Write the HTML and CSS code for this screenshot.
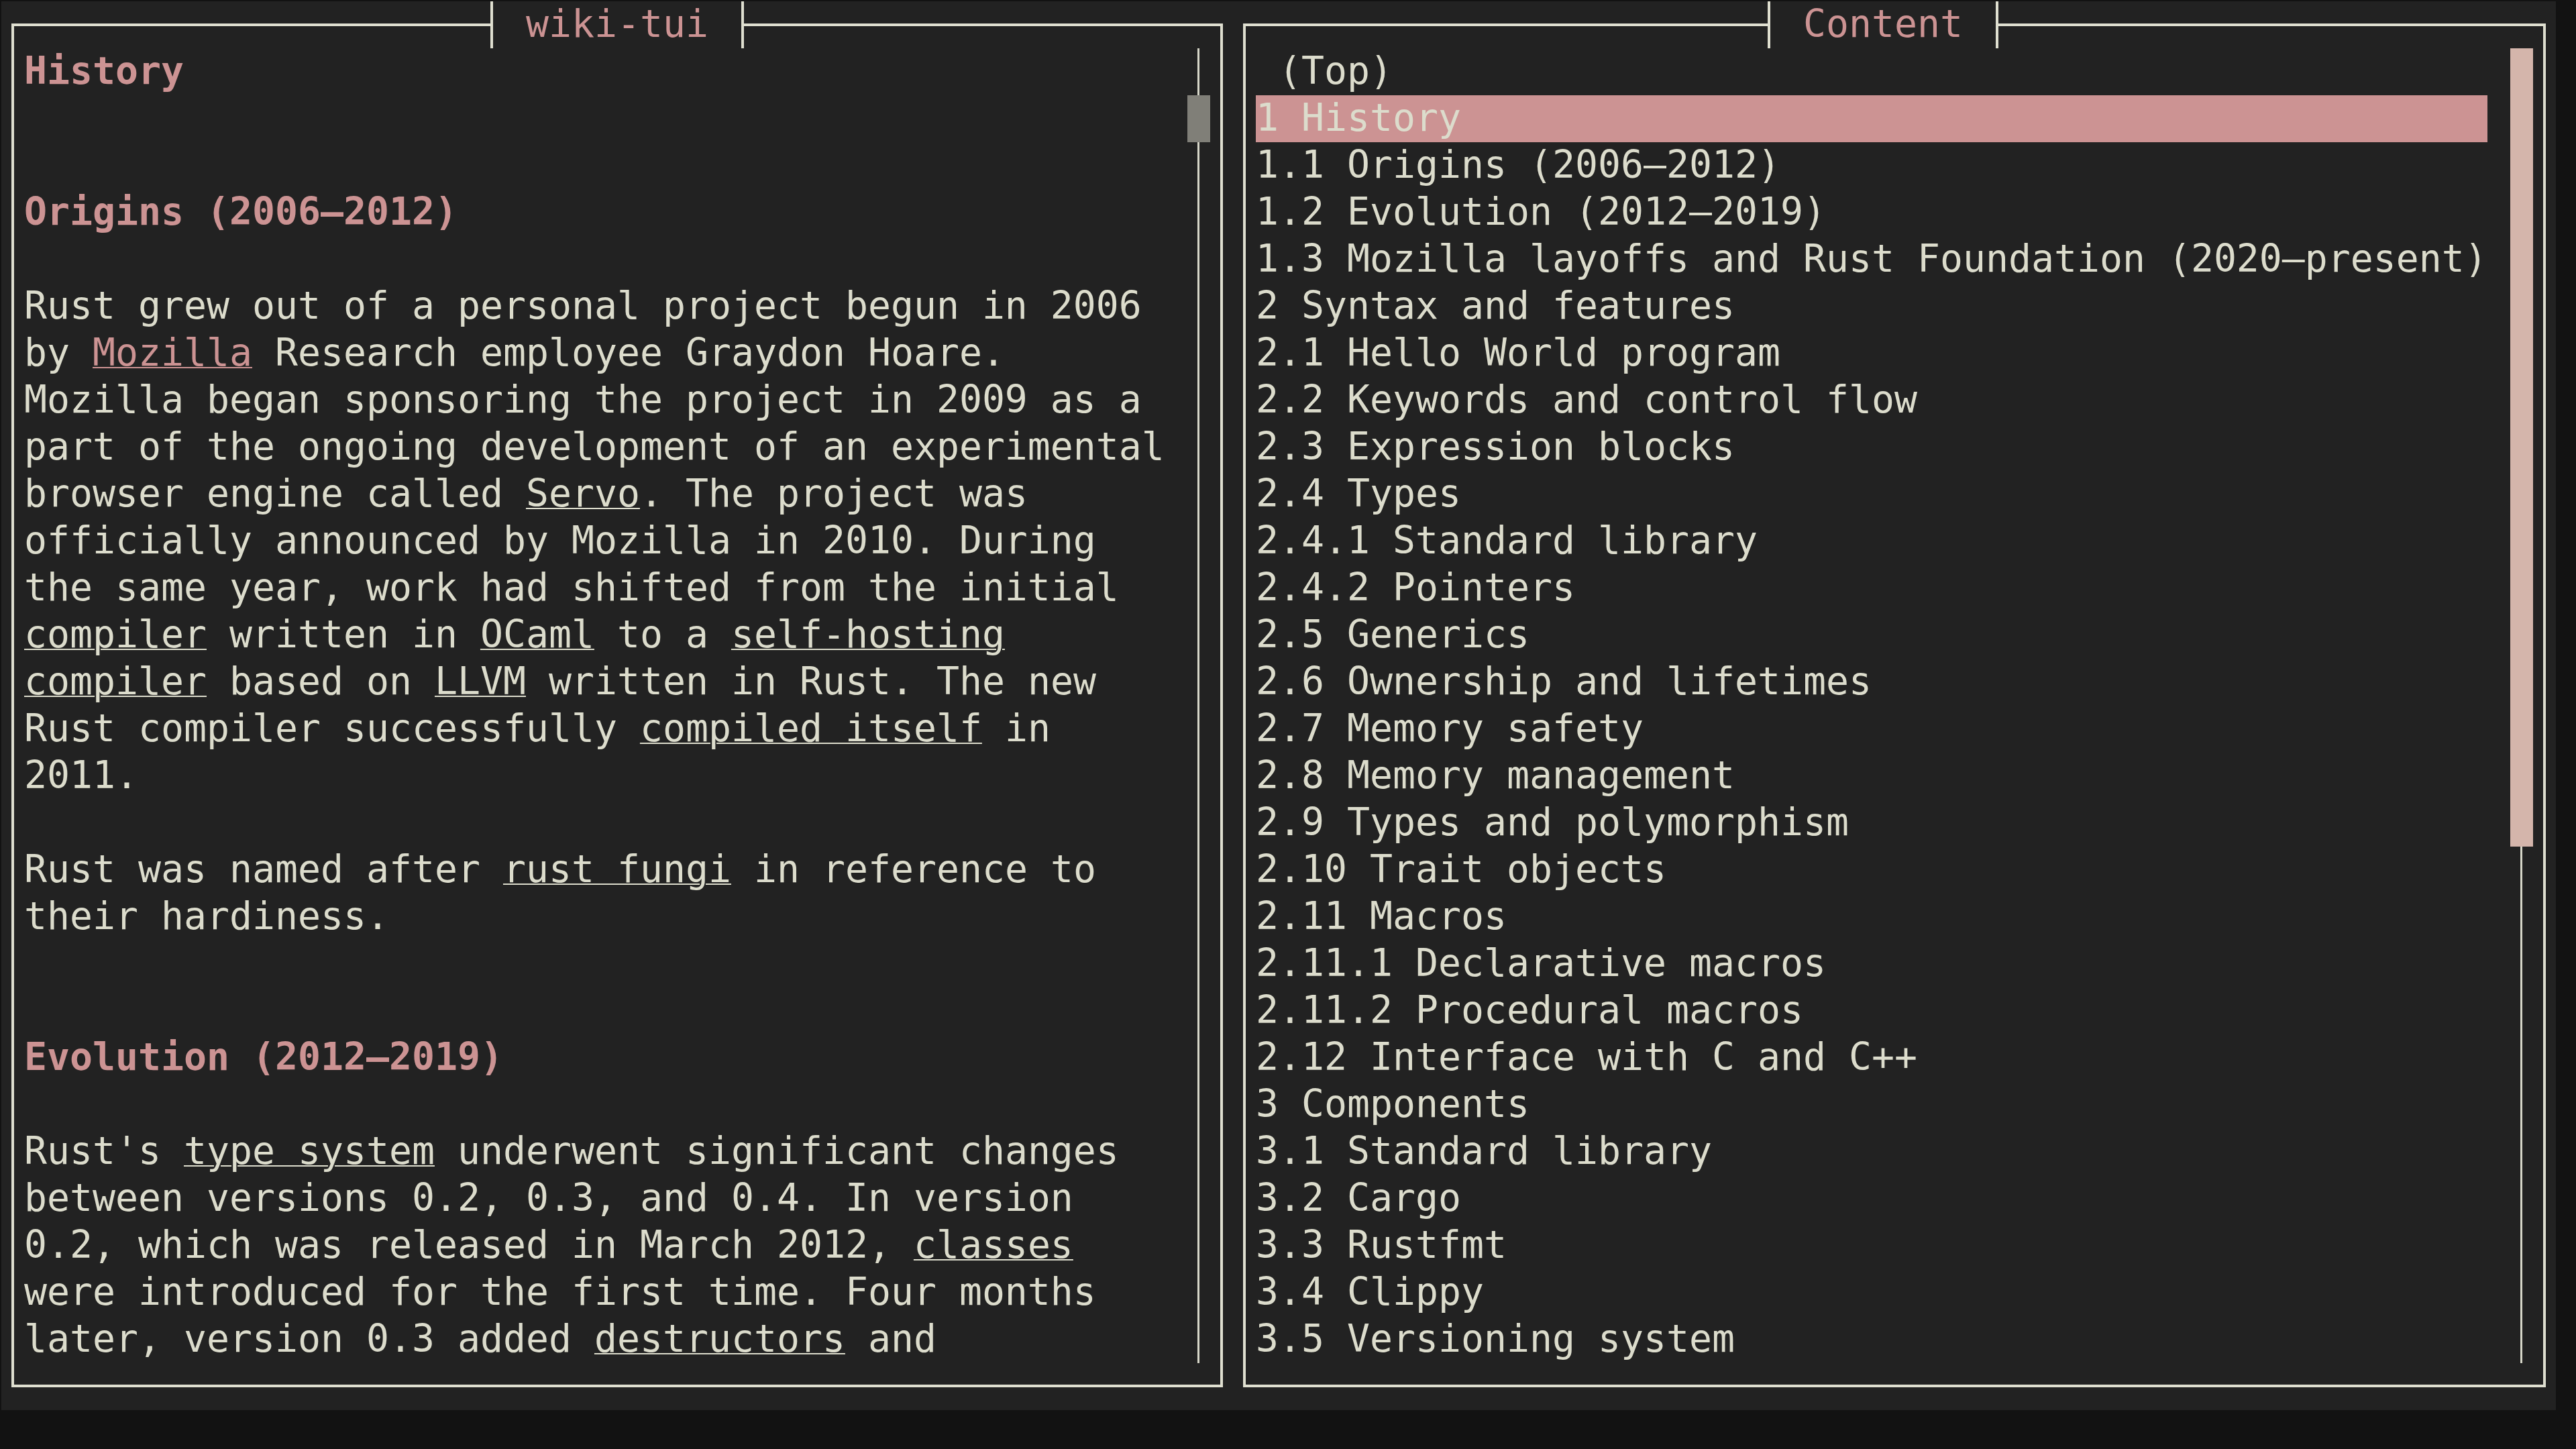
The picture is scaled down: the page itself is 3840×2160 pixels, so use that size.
FILE: index.html
```html
<!DOCTYPE html>
<html lang="en">
<head>
<meta charset="utf-8">
<title>wiki-tui</title>
<link rel="stylesheet" href="styles.css">
</head>
<body>
<div class="term">
  <section class="panel panel-article">
    <div class="title title-article">wiki-tui</div>
    <div class="frame">
      <div class="article">
        <div class="line head">History</div>
        <div class="line"></div>
        <div class="line"></div>
        <div class="line head">Origins (2006–2012)</div>
        <div class="line"></div>
        <div class="line">Rust grew out of a personal project begun in 2006</div>
        <div class="line">by <span class="link link-hl">Mozilla</span> Research employee Graydon Hoare.</div>
        <div class="line">Mozilla began sponsoring the project in 2009 as a</div>
        <div class="line">part of the ongoing development of an experimental</div>
        <div class="line">browser engine called <span class="link">Servo</span>. The project was</div>
        <div class="line">officially announced by Mozilla in 2010. During</div>
        <div class="line">the same year, work had shifted from the initial</div>
        <div class="line"><span class="link">compiler</span> written in <span class="link">OCaml</span> to a <span class="link">self-hosting</span></div>
        <div class="line"><span class="link">compiler</span> based on <span class="link">LLVM</span> written in Rust. The new</div>
        <div class="line">Rust compiler successfully <span class="link">compiled itself</span> in</div>
        <div class="line">2011.</div>
        <div class="line"></div>
        <div class="line">Rust was named after <span class="link">rust fungi</span> in reference to</div>
        <div class="line">their hardiness.</div>
        <div class="line"></div>
        <div class="line"></div>
        <div class="line head">Evolution (2012–2019)</div>
        <div class="line"></div>
        <div class="line">Rust's <span class="link">type system</span> underwent significant changes</div>
        <div class="line">between versions 0.2, 0.3, and 0.4. In version</div>
        <div class="line">0.2, which was released in March 2012, <span class="link">classes</span></div>
        <div class="line">were introduced for the first time. Four months</div>
        <div class="line">later, version 0.3 added <span class="link">destructors</span> and</div>
      </div>
      <div class="scroll scroll-article"><div class="thumb thumb-article"></div></div>
    </div>
  </section>
  <section class="panel panel-toc">
    <div class="title title-toc">Content</div>
    <div class="frame">
      <div class="toc">
        <div class="line"> (Top)</div>
        <div class="line sel">1 History</div>
        <div class="line">1.1 Origins (2006–2012)</div>
        <div class="line">1.2 Evolution (2012–2019)</div>
        <div class="line">1.3 Mozilla layoffs and Rust Foundation (2020–present)</div>
        <div class="line">2 Syntax and features</div>
        <div class="line">2.1 Hello World program</div>
        <div class="line">2.2 Keywords and control flow</div>
        <div class="line">2.3 Expression blocks</div>
        <div class="line">2.4 Types</div>
        <div class="line">2.4.1 Standard library</div>
        <div class="line">2.4.2 Pointers</div>
        <div class="line">2.5 Generics</div>
        <div class="line">2.6 Ownership and lifetimes</div>
        <div class="line">2.7 Memory safety</div>
        <div class="line">2.8 Memory management</div>
        <div class="line">2.9 Types and polymorphism</div>
        <div class="line">2.10 Trait objects</div>
        <div class="line">2.11 Macros</div>
        <div class="line">2.11.1 Declarative macros</div>
        <div class="line">2.11.2 Procedural macros</div>
        <div class="line">2.12 Interface with C and C++</div>
        <div class="line">3 Components</div>
        <div class="line">3.1 Standard library</div>
        <div class="line">3.2 Cargo</div>
        <div class="line">3.3 Rustfmt</div>
        <div class="line">3.4 Clippy</div>
        <div class="line">3.5 Versioning system</div>
      </div>
      <div class="scroll scroll-toc"><div class="thumb thumb-toc"></div></div>
    </div>
  </section>
</div>
</body>
</html>
```
FILE: styles.css
```css
html, body {
  margin: 0;
  padding: 0;
  background: #121212;
}

body {
  width: 3840px;
  height: 2160px;
  overflow: hidden;
}

.term {
  margin: 2px 0 0 2px;
  width: 3808px;
  height: 2100px;
  background: #222222;
  display: flex;
  font-family: "DejaVu Sans Mono", "Liberation Mono", monospace;
  font-size: 56.47px;
  line-height: 70px;
  color: #dcdccc;
}

.panel {
  position: relative;
  box-sizing: border-box;
  height: 2100px;
  padding: 33px 15px 34px 15px;
}

.panel-article {
  width: 1836px;
}

.panel-toc {
  width: 1972px;
}

.frame {
  box-sizing: border-box;
  height: 100%;
  border: 4px solid #dfdfd0;
  padding: 33px 15px 0 15px;
  display: flex;
  align-items: flex-start;
}

.title {
  position: absolute;
  top: 0;
  height: 70px;
  line-height: 67px;
  box-sizing: border-box;
  border-left: 4px solid #dfdfd0;
  border-right: 4px solid #dfdfd0;
  background: #222222;
  color: #cc9393;
  text-align: center;
  white-space: pre;
}

.title-article {
  left: 729px;
  width: 378px;
}

.title-toc {
  left: 797px;
  width: 344px;
}

.article {
  width: 1734px;
}

.toc {
  width: 1870px;
}

.line {
  height: 70px;
  line-height: 67px;
  white-space: pre;
}

.head {
  color: #cc9393;
  font-weight: 700;
}

.link {
  text-decoration: underline;
  text-decoration-thickness: 2px;
  text-underline-offset: 2px;
}

.link-hl {
  color: #cc9393;
}

.sel {
  width: 1836px;
  background: #cc9393;
  color: #dcdccc;
}

.scroll {
  width: 34px;
  height: 1960px;
  flex: none;
  background: linear-gradient(90deg, transparent 15px, #d6d6c8 15px, #d6d6c8 18px, transparent 18px);
}

.thumb-article {
  margin-top: 70px;
  height: 70px;
  background: #807f78;
}

.thumb-toc {
  height: 1190px;
  background: #d4b5ab;
}
```
